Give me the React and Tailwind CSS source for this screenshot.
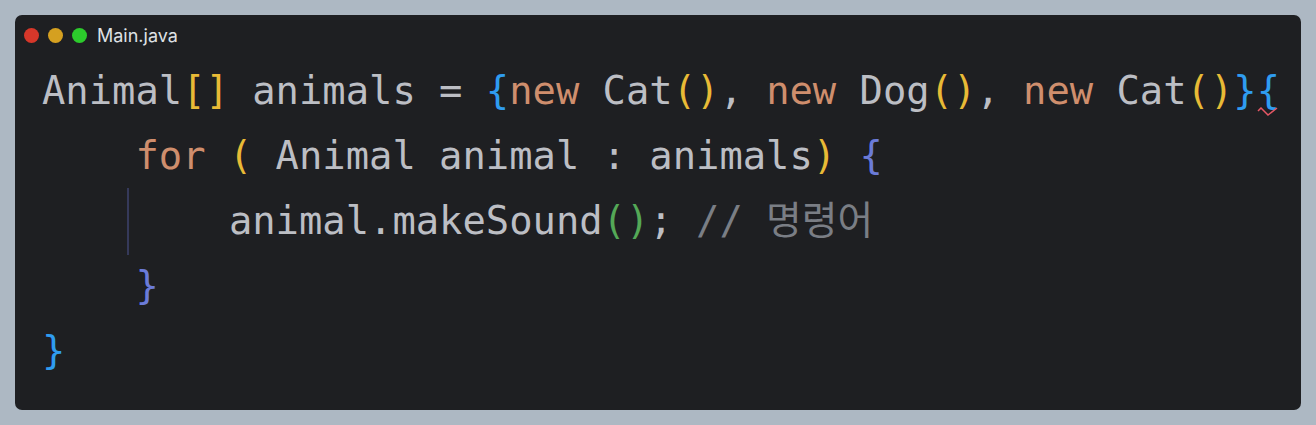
import React from "react";

const C = {
  txt: "text-[#bcbec4]",
  kw: "text-[#cf8e6d]",
  yel: "text-[#e8ba36]",
  blue: "text-[#2f9cf0]",
  purp: "text-[#6b7bd8]",
  green: "text-[#54a857]",
  cmt: "text-[#7a7e85]",
};

const Line = ({ indent = 0, children }) => (
  <div className="relative h-[65px] flex items-center whitespace-pre">
    <span>{" ".repeat(indent)}</span>
    {children}
  </div>
);

const App = () => {
  return (
    <div className="w-[1316px] h-[425px] bg-[#adb8c3] p-[15px]">
      <div className="w-[1286px] h-[395px] bg-[#1e1f22] rounded-[7px] flex flex-col">
        <div className="h-[40px] flex items-center pl-[9px] gap-[9px]">
          <span className="w-[15px] h-[15px] rounded-full bg-[#d6372a]" />
          <span className="w-[15px] h-[15px] rounded-full bg-[#d5a020]" />
          <span className="w-[15px] h-[15px] rounded-full bg-[#2ccb2c]" />
          <span className="text-[18px] text-[#dfe1e5] font-['Inter','Noto_Sans',sans-serif] ml-[1px]">
            Main.java
          </span>
        </div>
        <div
          className={`pl-[27px] pt-[4px] text-[38.8px] font-['DejaVu_Sans_Mono','Noto_Sans_CJK_KR',monospace] ${C.txt}`}
        >
          <Line>
            <span>Animal</span>
            <span className={C.yel}>[]</span>
            <span> animals = </span>
            <span className={C.blue}>{"{"}</span>
            <span className={C.kw}>new</span>
            <span> Cat</span>
            <span className={C.yel}>()</span>
            <span>, </span>
            <span className={C.kw}>new</span>
            <span> Dog</span>
            <span className={C.yel}>()</span>
            <span>, </span>
            <span className={C.kw}>new</span>
            <span> Cat</span>
            <span className={C.yel}>()</span>
            <span className={C.blue}>{"}"}</span>
            <span className={`${C.blue} relative`}>
              {"{"}
              <svg
                className="absolute left-[0px] bottom-[4px]"
                width="22"
                height="10"
                viewBox="0 0 22 10"
              >
                <path
                  d="M1 4 L4 1 L11 8 L20 1"
                  fill="none"
                  stroke="#e55765"
                  strokeWidth="1.5"
                />
              </svg>
            </span>
          </Line>
          <Line indent={4}>
            <span className={C.kw}>for</span>
            <span> </span>
            <span className={C.yel}>(</span>
            <span> Animal animal : animals</span>
            <span className={C.yel}>)</span>
            <span> </span>
            <span className={C.purp}>{"{"}</span>
          </Line>
          <Line indent={8}>
            <span className="absolute left-[85px] top-[-1px] h-[67px] w-[2px] bg-[#35395a]" />
            <span>animal.makeSound</span>
            <span className={C.green}>()</span>
            <span>; </span>
            <span className={C.cmt}>// 명령어</span>
          </Line>
          <Line indent={4}>
            <span className={C.purp}>{"}"}</span>
          </Line>
          <Line>
            <span className={C.blue}>{"}"}</span>
          </Line>
        </div>
      </div>
    </div>
  );
};

export default App;
